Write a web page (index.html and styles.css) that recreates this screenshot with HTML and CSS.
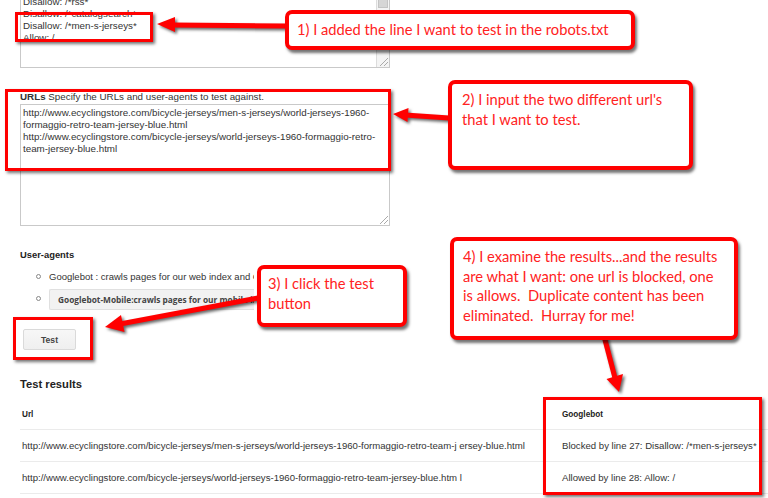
FILE: index.html
```html
<!DOCTYPE html>
<html lang="en">
<head>
    <meta charset="UTF-8">
    <title>robots.txt tester</title>
    <link rel="stylesheet" href="styles.css">
</head>
<body>
    <div class="page">
        <!-- robots.txt content -->
        <div class="textarea robots">
            <div class="textarea-text">
                Disallow: /*rss*<br>
                Disallow: /*catalogsearch*<br>
                Disallow: /*men-s-jerseys*<br>
                Allow: /
            </div>
            <div class="scrollbar"><div class="thumb"></div></div>
            <span class="grip"></span>
        </div>

        <div class="field-label"><b>URLs</b> Specify the URLs and user-agents to test against.</div>
        <div class="textarea urls">
            <div class="textarea-text">
                http://www.ecyclingstore.com/bicycle-jerseys/men-s-jerseys/world-jerseys-1960-<br>
                formaggio-retro-team-jersey-blue.html<br>
                http://www.ecyclingstore.com/bicycle-jerseys/world-jerseys-1960-formaggio-retro-<br>
                team-jersey-blue.html
            </div>
            <span class="grip"></span>
        </div>

        <div class="section-title">User-agents</div>
        <ul class="agents">
            <li><span class="bullet"></span><span class="agent-name">Googlebot : crawls pages for our web index and Google News</span></li>
            <li><span class="bullet"></span><span class="agent-pick">Googlebot-Mobile:crawls pages for our mobile index</span></li>
        </ul>

        <button class="btn-test">Test</button>

        <div class="results-title">Test results</div>
        <table class="results">
            <tr>
                <th class="col-url">Url</th>
                <th class="col-bot">Googlebot</th>
            </tr>
            <tr>
                <td class="col-url">http://www.ecyclingstore.com/bicycle-jerseys/men-s-jerseys/world-jerseys-1960-formaggio-retro-team-j ersey-blue.html</td>
                <td class="col-bot">Blocked by line 27: Disallow: /*men-s-jerseys*</td>
            </tr>
            <tr>
                <td class="col-url">http://www.ecyclingstore.com/bicycle-jerseys/world-jerseys-1960-formaggio-retro-team-jersey-blue.htm l</td>
                <td class="col-bot">Allowed by line 28: Allow: /</td>
            </tr>
        </table>
    </div>

    <!-- Annotations -->
    <div class="mark mark-1"></div>
    <div class="mark mark-2"></div>
    <div class="mark mark-3"></div>
    <div class="mark mark-4"></div>

    <svg class="arrows" width="768" height="498" viewBox="0 0 768 498">
        <line x1="286" y1="26" x2="172" y2="25" />
        <polygon points="175,17 175,32 157,24" />
        <line x1="449" y1="118" x2="405" y2="115" />
        <polygon points="408.5,108 407.5,122 393,114" />
        <line x1="258" y1="298" x2="120" y2="324" />
        <polygon points="124.5,332 121,315 105,327" />
        <line x1="604" y1="336" x2="615" y2="378" />
        <polygon points="623,374 606.5,379 619,392" />
    </svg>

    <div class="callout callout-1">1) I added the line I want to test in the robots.txt</div>
    <div class="callout callout-2">2) I input the two different url's<br>that I want to test.</div>
    <div class="callout callout-3">3) I click the test<br>button</div>
    <div class="callout callout-4">4) I examine the results...and the results<br>are what I want: one url is blocked, one<br>is allows.&nbsp; Duplicate content has been<br>eliminated.&nbsp; Hurray for me!</div>
</body>
</html>
```

FILE: styles.css
```css
/* Page */
body {
    margin: 0;
    width: 768px;
    height: 498px;
    overflow: hidden;
    position: relative;
    background-color: #fff;
    color: #333;
    font-family: "Liberation Sans", Arial, sans-serif;
    font-size: 9.8px;
    line-height: 12px;
}

.page {
    padding-left: 20px;
}

/* Fake textareas */
.textarea {
    box-sizing: border-box;
    width: 370px;
    border: 1px solid #c9c9c9;
    display: flex;
    position: relative;
    background-color: #fff;
}
.textarea-text {
    flex: 1;
    padding: 2px 0 0 2px;
    white-space: nowrap;
    overflow: hidden;
}
.robots {
    margin-top: -8px;
    height: 76px;
}
.robots .textarea-text {
    padding-top: 3px;
}
.scrollbar {
    width: 12px;
    border-left: 1px solid #dcdcdc;
    background-color: #f4f4f4;
}
.thumb {
    height: 14px;
    margin: 0 1px;
    background-color: #d6d6d6;
    border: 1px solid #c4c4c4;
    border-top: none;
}
.grip {
    position: absolute;
    right: 1px;
    bottom: 1px;
    width: 8px;
    height: 8px;
    background: linear-gradient(135deg, transparent 45%, #aaa 45%, #aaa 55%, transparent 55%, transparent 70%, #aaa 70%, #aaa 80%, transparent 80%);
}
.urls {
    height: 122px;
    margin-top: 1px;
}

.field-label {
    margin-top: 23px;
}

/* User agents */
.section-title {
    margin-top: 23px;
    font-weight: bold;
    font-size: 9.4px;
    color: #222;
}
.agents {
    list-style: none;
    margin: 10px 0 0 0;
    padding: 0;
}
.agents li {
    display: flex;
    align-items: center;
    gap: 8px;
    padding-left: 16px;
    font-size: 9.5px;
}
.agents li + li {
    margin-top: 6px;
}
.agent-name {
    max-width: 205px;
    overflow: hidden;
    white-space: nowrap;
}
.bullet {
    width: 3px;
    height: 3px;
    border: 1px solid #888;
    border-radius: 50%;
    margin-top: -2px;
}
.agent-pick {
    box-sizing: border-box;
    width: 205px;
    height: 21px;
    padding: 0 8px;
    display: flex;
    align-items: center;
    background-color: #f2f2f2;
    border: 1px solid #e0e0e0;
    border-right: none;
    border-radius: 2px 0 0 2px;
    font-family: "Open Sans", sans-serif;
    font-weight: bold;
    font-size: 8.3px;
    color: #444;
    white-space: nowrap;
    overflow: hidden;
}

/* Test button */
.btn-test {
    display: block;
    margin: 19px 0 0 3px;
    width: 53px;
    height: 21px;
    padding: 0;
    background: linear-gradient(#f7f7f7, #efefef);
    border: 1px solid #dadada;
    border-radius: 2px;
    font-family: "Liberation Sans", Arial, sans-serif;
    font-weight: bold;
    font-size: 8.6px;
    color: #444;
}

/* Results */
.results-title {
    margin-top: 27px;
    font-weight: bold;
    font-size: 11.2px;
    line-height: 14px;
    color: #222;
}
.results {
    margin-top: 7px;
    width: 748px;
    border-collapse: collapse;
}
.results th,
.results td {
    padding: 0;
    text-align: left;
    border-bottom: 1px solid #ebebeb;
    white-space: nowrap;
}
.results th {
    height: 29px;
    font-size: 8.2px;
    color: #222;
    padding-top: 2px;
}
.results td {
    height: 31px;
    font-size: 9.6px;
}
.col-url {
    width: 526px;
    padding-left: 2px !important;
}
.col-bot {
    padding-left: 14px !important;
}

/* Annotations */
.mark {
    position: absolute;
    box-sizing: border-box;
    border: 3px solid #f00;
    box-shadow: 2px 2px 3px rgba(0, 0, 0, 0.55);
}
.mark-1 { left: 15px; top: 12px; width: 138px; height: 30px; }
.mark-2 { left: 5px; top: 89px; width: 386px; height: 82px; }
.mark-3 { left: 13px; top: 317px; width: 80px; height: 43px; }
.mark-4 { left: 543px; top: 397px; width: 219px; height: 98px; }

.arrows {
    position: absolute;
    left: 0;
    top: 0;
    filter: drop-shadow(2px 2px 1.5px rgba(0, 0, 0, 0.6));
}
.arrows line {
    stroke: #f00;
    stroke-width: 5;
}
.arrows polygon {
    fill: #f00;
}

.callout {
    position: absolute;
    box-sizing: border-box;
    background-color: #fff;
    border: 4px solid #f00;
    border-radius: 7px;
    box-shadow: 2px 3px 3px rgba(0, 0, 0, 0.55);
    color: #f22;
    font-family: Lato, sans-serif;
    font-size: 14.7px;
    line-height: 19.5px;
    white-space: nowrap;
}
.callout-1 { left: 285px; top: 10px; width: 350px; height: 40px; padding: 6px 0 0 8px; }
.callout-2 { left: 448px; top: 80px; width: 245px; height: 90px; padding: 6px 0 0 10px; }
.callout-3 { left: 257px; top: 265px; width: 150px; height: 62px; padding: 5px 0 0 7px; }
.callout-4 { left: 450px; top: 237px; width: 288px; height: 103px; padding: 6px 0 0 9px; }
```
